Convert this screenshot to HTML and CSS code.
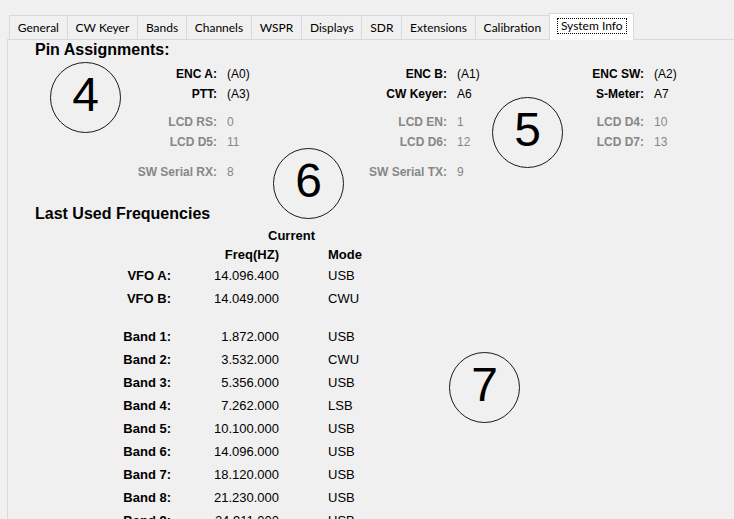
FILE: index.html
```
<!DOCTYPE html>
<html>
<head>
<meta charset="utf-8">
<link rel="stylesheet" href="styles.css">
</head>
<body>
<div class="window">
  <div class="tabstrip">
    <div class="tab">General</div>
    <div class="tab">CW Keyer</div>
    <div class="tab">Bands</div>
    <div class="tab">Channels</div>
    <div class="tab">WSPR</div>
    <div class="tab">Displays</div>
    <div class="tab">SDR</div>
    <div class="tab">Extensions</div>
    <div class="tab">Calibration</div>
    <div class="tab active"><span class="focus">System Info</span></div>
  </div>
  <div class="panel">
    <h2 class="heading">Pin Assignments:</h2>
    <div class="pins first">
      <span class="lbl">ENC A:</span><span class="val">(A0)</span>
      <span class="lbl">ENC B:</span><span class="val">(A1)</span>
      <span class="lbl">ENC SW:</span><span class="val">(A2)</span>
      <span class="lbl">PTT:</span><span class="val">(A3)</span>
      <span class="lbl">CW Keyer:</span><span class="val">A6</span>
      <span class="lbl">S-Meter:</span><span class="val">A7</span>
    </div>
    <div class="pins dim">
      <span class="lbl">LCD RS:</span><span class="val">0</span>
      <span class="lbl">LCD EN:</span><span class="val">1</span>
      <span class="lbl">LCD D4:</span><span class="val">10</span>
      <span class="lbl">LCD D5:</span><span class="val">11</span>
      <span class="lbl">LCD D6:</span><span class="val">12</span>
      <span class="lbl">LCD D7:</span><span class="val">13</span>
    </div>
    <div class="pins dim serial">
      <span class="lbl">SW Serial RX:</span><span class="val">8</span>
      <span class="lbl">SW Serial TX:</span><span class="val">9</span>
    </div>

    <h2 class="heading freq-heading">Last Used Frequencies</h2>
    <div class="freqs">
      <div class="hdr current">Current</div>
      <div class="hdr hrow freqcol">Freq(HZ)</div>
      <div class="hdr hrow modecol">Mode</div>

      <div class="name">VFO A:</div><div class="fv">14.096.400</div><div class="mode">USB</div>
      <div class="name">VFO B:</div><div class="fv">14.049.000</div><div class="mode">CWU</div>
      <div class="spacer"></div>
      <div class="name">Band 1:</div><div class="fv">1.872.000</div><div class="mode">USB</div>
      <div class="name">Band 2:</div><div class="fv">3.532.000</div><div class="mode">CWU</div>
      <div class="name">Band 3:</div><div class="fv">5.356.000</div><div class="mode">USB</div>
      <div class="name">Band 4:</div><div class="fv">7.262.000</div><div class="mode">LSB</div>
      <div class="name">Band 5:</div><div class="fv">10.100.000</div><div class="mode">USB</div>
      <div class="name">Band 6:</div><div class="fv">14.096.000</div><div class="mode">USB</div>
      <div class="name">Band 7:</div><div class="fv">18.120.000</div><div class="mode">USB</div>
      <div class="name">Band 8:</div><div class="fv">21.230.000</div><div class="mode">USB</div>
      <div class="name">Band 9:</div><div class="fv">24.911.000</div><div class="mode">USB</div>
    </div>
  </div>

  <div class="callout c4">4</div>
  <div class="callout c5">5</div>
  <div class="callout c6">6</div>
  <div class="callout c7">7</div>
</div>
</body>
</html>
```
FILE: styles.css
```
html, body {
  margin: 0;
  padding: 0;
  height: 100%;
  overflow: hidden;
  background: #f0f0f0;
}

.window {
  position: relative;
  height: 100%;
  display: flex;
  flex-direction: column;
  font-family: "Liberation Sans", Arial, sans-serif;
  color: #000;
}

/* ---------- tabs ---------- */
.tabstrip {
  position: relative;
  z-index: 1;
  display: flex;
  align-items: flex-end;
  height: 39px;
  padding-left: 10px;
  box-sizing: border-box;
}

.tab {
  box-sizing: border-box;
  height: 24px;
  margin-left: -1px;
  padding: 5px 7.8px 0;
  border: 1px solid #d9d9d9;
  border-bottom: none;
  background: #f0f0f0;
  font-family: Lato, "Open Sans", sans-serif;
  font-size: 12px;
  line-height: 14px;
  white-space: nowrap;
}

.tab.active {
  height: 27px;
  margin-bottom: -1px;
  padding: 4px 6px 0 7px;
  background: #fff;
}

.focus {
  display: inline-block;
  padding: 0 3px;
  border: 1px dotted #000;
}

/* ---------- panel ---------- */
.panel {
  flex: 1;
  margin-left: 7px;
  padding-left: 27px;
  border-top: 1px solid #d9d9d9;
  border-left: 1px solid #dadada;
  overflow: hidden;
}

.heading {
  margin: 0;
  font-size: 16px;
  line-height: 16px;
  font-weight: bold;
}

.heading:first-child {
  padding-top: 2px;
}

.freq-heading {
  margin-top: 24px;
}

/* pin grid */
.pins {
  display: grid;
  grid-template-columns: 192px 73px 157px 83px 114px 1fr;
  font-size: 12px;
  line-height: 20px;
  margin-top: 8px;
}

.pins.first {
  margin-top: 6px;
}

.pins.serial {
  margin-top: 10px;
}

.pins .lbl {
  font-weight: bold;
  text-align: right;
  padding-right: 10px;
}

.pins.dim {
  color: #878787;
}

/* frequency table */
.freqs {
  display: grid;
  grid-template-columns: 136px 108px 133px;
  font-size: 13px;
  line-height: 23px;
  margin-top: 4px;
}

.hdr {
  font-weight: bold;
}

.current {
  grid-column: 2 / 4;
  text-align: center;
  line-height: 20px;
}

.hrow {
  line-height: 18px;
}

.freqcol {
  grid-column: 2;
  text-align: right;
}

.modecol {
  grid-column: 3;
  padding-left: 49px;
}

.name {
  font-weight: bold;
  text-align: right;
}

.fv {
  text-align: right;
}

.mode {
  padding-left: 49px;
}

.spacer {
  grid-column: 1 / -1;
  height: 15px;
}

/* numbered annotation circles */
.callout {
  position: absolute;
  box-sizing: border-box;
  width: 71px;
  height: 71px;
  padding-bottom: 5px;
  border: 1px solid #1a1a1a;
  border-radius: 50%;
  display: flex;
  align-items: center;
  justify-content: center;
  font-family: "Liberation Sans", Arial, sans-serif;
  font-size: 48px;
  line-height: 1;
  color: #000;
}

.c4 { left: 50px;  top: 62px; }
.c5 { left: 492px; top: 97px; }
.c6 { left: 273px; top: 148px; }
.c7 { left: 449px; top: 352px; }
```
